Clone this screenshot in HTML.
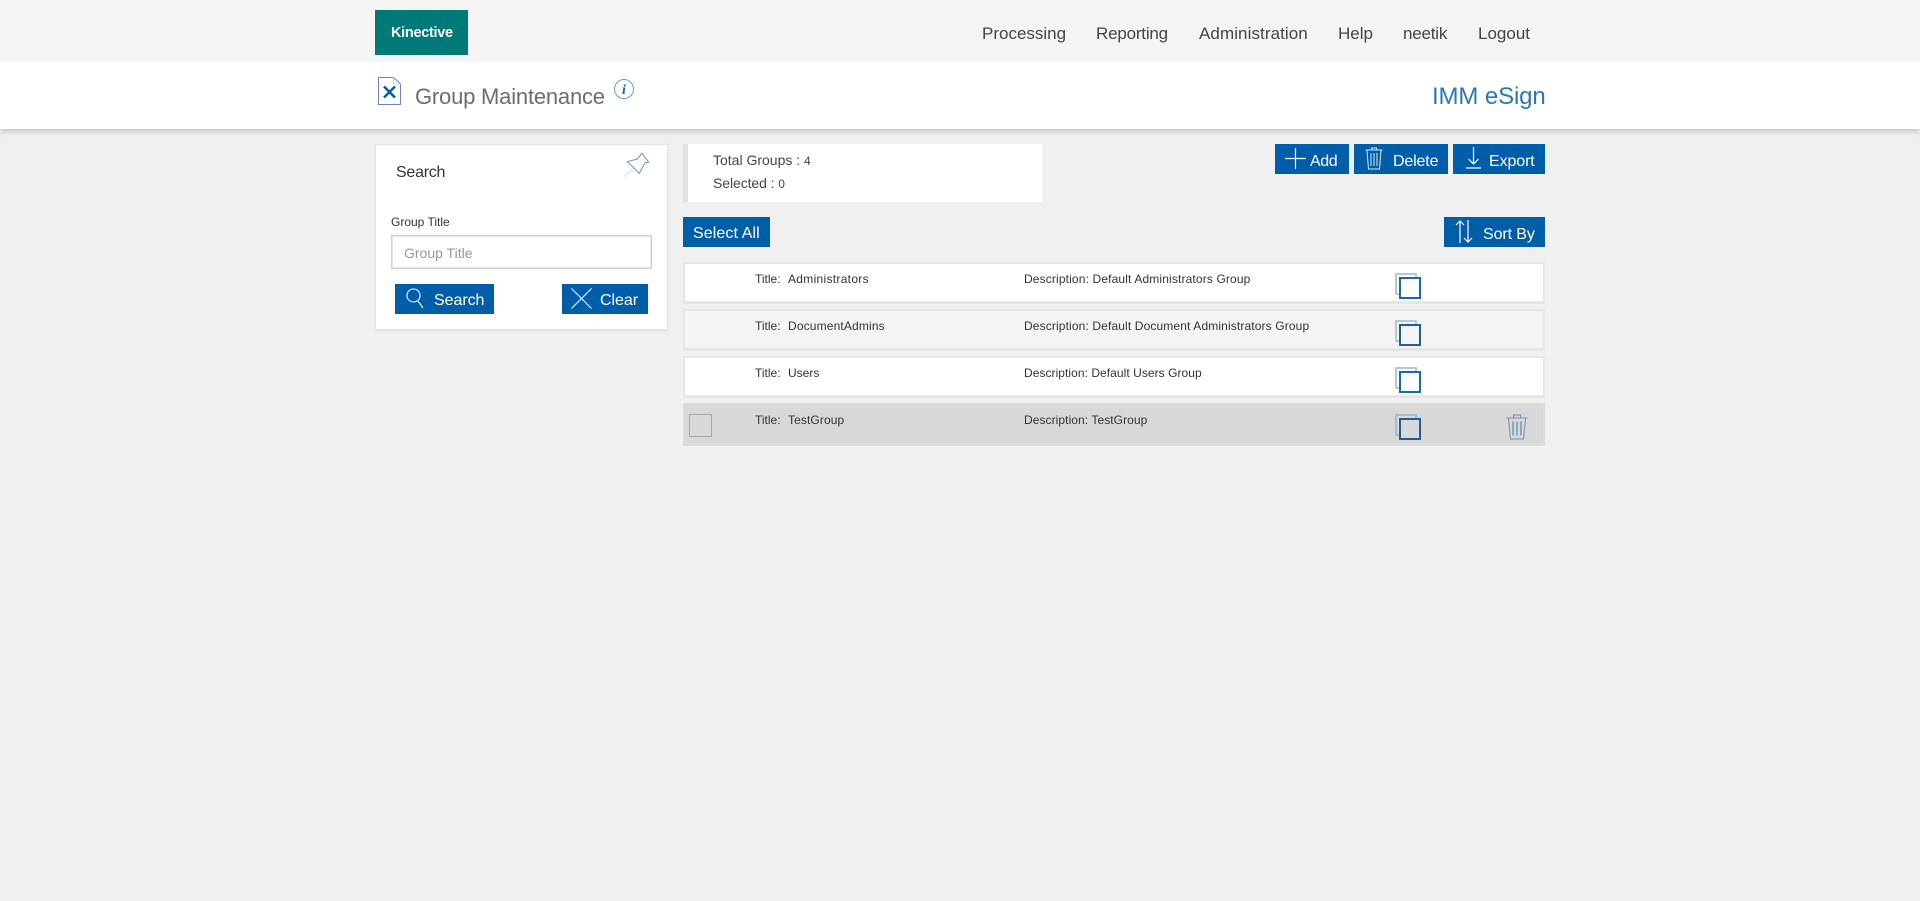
<!DOCTYPE html>
<html lang="en">
<head>
<meta charset="utf-8">
<title>Group Maintenance</title>
<style>
html,body{margin:0;padding:0;width:1920px;height:901px;overflow:hidden;background:#f0f0f0;font-family:"Liberation Sans",sans-serif;color:#333}
.a{position:absolute;white-space:nowrap}
.box{position:absolute;box-sizing:border-box}
.topbar{position:absolute;left:0;top:0;width:1920px;height:62px;background:#f4f4f4;z-index:0}
.head{position:absolute;left:0;top:62px;width:1920px;height:67px;background:#fff;box-shadow:0 3px 5px rgba(0,0,0,.16);clip-path:inset(0 0 -12px 0)}
.nav{font-size:17px;line-height:20px;top:24px;color:#444}
.btn{position:absolute;background:#005ea8;height:30px}
.bt{color:#fff;font-size:16px;line-height:20px}
.row{position:absolute;left:683px;width:862px;box-sizing:border-box;border:2px solid #e6e6e6;border-bottom-width:3px;background:#fff}
.rt{font-size:12px;line-height:16px;color:#333}
.back{width:22px;height:22px;border:2px solid #b4cad2;border-radius:1px}
.front{width:22px;height:22px;border:2px solid #1a69ab}
svg{position:absolute;overflow:visible}
</style>
</head>
<body>
<div class="topbar"></div>
<div class="box" style="left:375px;top:10px;width:93px;height:45px;background:#007a78"></div>
<div class="a" style="left:391px;top:23px;font-size:14.5px;line-height:20px;font-weight:bold;color:#fff;letter-spacing:-.3px">Kinective</div>
<div class="a nav" style="left:982px">Processing</div>
<div class="a nav" style="left:1096px;letter-spacing:-.2px">Reporting</div>
<div class="a nav" style="left:1199px;letter-spacing:.08px">Administration</div>
<div class="a nav" style="left:1338px">Help</div>
<div class="a nav" style="left:1403px;letter-spacing:-.2px">neetik</div>
<div class="a nav" style="left:1478px">Logout</div>

<div class="head"></div>
<svg style="left:378px;top:77px" width="24" height="30" viewBox="0 0 24 30">
<path d="M.5.5H15.5L22.5 7V27.5H.5Z" fill="#fff" stroke="#6f80bc"/>
<path d="M15.5 .5V7H22.5" fill="none" stroke="#c0cede"/>
<path d="M6 9.5L17 20.5M17 9.5L6 20.5" stroke="#005ea8" stroke-width="2.4" fill="none"/>
</svg>
<div class="a" style="left:415px;top:83px;font-size:22px;line-height:28px;color:#6c6c78;letter-spacing:-.2px">Group Maintenance</div>
<svg style="left:614px;top:79px" width="20" height="20" viewBox="0 0 20 20">
<circle cx="10" cy="10" r="9.5" fill="#fff" stroke="#6f9cc8"/>
<text x="10" y="15" text-anchor="middle" font-family="Liberation Serif,serif" font-style="italic" font-weight="bold" font-size="14" fill="#1a5f9e">i</text>
</svg>
<div class="a" style="left:1432px;top:81px;font-size:24px;line-height:32px;color:#2a78b8;letter-spacing:-.12px">IMM eSign</div>

<!-- search panel -->
<div class="box" style="left:375px;top:144px;width:293px;height:186px;background:#fff;border:1px solid #e4e4e4;box-shadow:0 1px 2px rgba(0,0,0,.08)"></div>
<div class="a" style="left:396px;top:163px;font-size:16px;line-height:20px;color:#333;letter-spacing:-.25px">Search</div>
<svg style="left:622px;top:152px" width="28" height="27" viewBox="0 0 28 27" fill="none">
<path d="M19.7 1.3L26.7 10L23 11L17.3 21.3L5.3 9.7L15.5 7Z" stroke="#6c93c4" stroke-width="1"/>
<path d="M11.3 16.3L2 24.7" stroke="#d4dce6" stroke-width="1"/>
</svg>
<div class="a" style="left:391px;top:214px;font-size:12px;line-height:16px;color:#333">Group Title</div>
<div class="box" style="left:391px;top:235px;width:261px;height:34px;background:#fff;border:1px solid #cfcfcf;box-shadow:inset 0 0 0 .5px #cfcfcf"></div>
<div class="a" style="left:404px;top:244px;font-size:14px;line-height:18px;color:#999">Group Title</div>
<div class="btn" style="left:395px;top:284px;width:99px"></div>
<svg style="left:406px;top:288px" width="18" height="20" viewBox="0 0 18 20" fill="none" stroke="#fff" stroke-width="1.1">
<circle cx="7.5" cy="7.5" r="6.5"/><path d="M12 13L17 20"/>
</svg>
<div class="a bt" style="left:434px;top:291px;letter-spacing:-.05px">Search</div>
<div class="btn" style="left:562px;top:284px;width:86px"></div>
<svg style="left:571px;top:288px" width="21" height="21" viewBox="0 0 21 21" fill="none" stroke="#fff" stroke-width="1.1">
<path d="M.5.5L20.5 20.5M20.5.5L.5 20.5"/>
</svg>
<div class="a bt" style="left:600px;top:291px;letter-spacing:-.05px">Clear</div>

<!-- stats -->
<div class="box" style="left:683px;top:144px;width:359px;height:58px;background:#fff;border-left:5px solid #e0e0e0"></div>
<div class="a" style="left:713px;top:151px;font-size:14px;line-height:18px;color:#444">Total Groups : <span style="font-size:12px">4</span></div>
<div class="a" style="left:713px;top:174px;font-size:14px;line-height:18px;color:#444;letter-spacing:-.08px">Selected : <span style="font-size:12px">0</span></div>

<!-- top buttons -->
<div class="btn" style="left:1275px;top:144px;width:74px"></div>
<svg style="left:1285px;top:148px" width="21" height="21" viewBox="0 0 21 21" stroke="#fff" stroke-width="1.2"><path d="M10.5 0V21M0 10.5H21"/></svg>
<div class="a bt" style="left:1310px;top:152px;letter-spacing:-.4px">Add</div>
<div class="btn" style="left:1354px;top:144px;width:94px"></div>
<svg style="left:1365px;top:147px" width="18" height="23" viewBox="0 0 18 23" fill="none" stroke="#d8e8f4" stroke-width="1">
<path d="M6.5 2.5V1H11.5V2.5M.5 3H17.5M2 3.5L3.5 22H14.5L16 3.5M6 6V19M9 6V19M12 6V19"/>
</svg>
<div class="a bt" style="left:1393px;top:152px;letter-spacing:-.15px">Delete</div>
<div class="btn" style="left:1453px;top:144px;width:92px"></div>
<svg style="left:1466px;top:147px" width="15" height="22" viewBox="0 0 15 22" fill="none" stroke="#fff" stroke-width="1.2">
<path d="M7.5 0V17M2.5 12L7.5 17L12.5 12M0 21H15"/>
</svg>
<div class="a bt" style="left:1489px;top:152px;letter-spacing:-.1px">Export</div>

<div class="btn" style="left:683px;top:217px;width:87px"></div>
<div class="a bt" style="left:693px;top:224px;letter-spacing:.1px">Select All</div>
<div class="btn" style="left:1444px;top:217px;width:101px"></div>
<svg style="left:1455px;top:220px" width="18" height="23" viewBox="0 0 18 23" fill="none" stroke="#fff" stroke-width="1.2">
<path d="M5 23V1M1 5L5 1L9 5M13 0V22M9 18L13 22L17 18"/>
</svg>
<div class="a bt" style="left:1483px;top:225px;letter-spacing:-.1px">Sort By</div>

<!-- rows -->
<div class="row" style="top:262px;height:42px"></div>
<div class="row" style="top:309px;height:42px;background:#f4f4f4"></div>
<div class="row" style="top:356px;height:42px"></div>
<div class="row" style="top:403px;height:43px;background:#d8d8d8;border-color:#dcdcdc"></div>

<div class="a rt" style="left:755px;top:271px">Title:</div><div class="a rt" style="left:788px;top:271px;letter-spacing:.3px">Administrators</div>
<div class="a rt" style="left:1024px;top:271px;letter-spacing:.14px">Description: Default Administrators Group</div>
<div class="a rt" style="left:755px;top:318px">Title:</div><div class="a rt" style="left:788px;top:318px;letter-spacing:.15px">DocumentAdmins</div>
<div class="a rt" style="left:1024px;top:318px;letter-spacing:.13px">Description: Default Document Administrators Group</div>
<div class="a rt" style="left:755px;top:365px">Title:</div><div class="a rt" style="left:788px;top:365px">Users</div>
<div class="a rt" style="left:1024px;top:365px;letter-spacing:.05px">Description: Default Users Group</div>
<div class="a rt" style="left:755px;top:412px">Title:</div><div class="a rt" style="left:788px;top:412px;letter-spacing:.1px">TestGroup</div>
<div class="a rt" style="left:1024px;top:412px;letter-spacing:.07px">Description: TestGroup</div>

<div class="box" style="left:689px;top:414px;width:23px;height:23px;border:1px solid #a8a8a8;background:#d8d8d8"></div>

<div class="box back" style="left:1395px;top:273px"></div>
<div class="box front" style="left:1399px;top:277px;background:#fff"></div>
<div class="box back" style="left:1395px;top:320px"></div>
<div class="box front" style="left:1399px;top:324px;background:#f4f4f4;border-color:#1f5f96"></div>
<div class="box back" style="left:1395px;top:367px"></div>
<div class="box front" style="left:1399px;top:371px;background:#fff"></div>
<div class="box back" style="left:1395px;top:414px;border-color:#a6bcc8"></div>
<div class="box front" style="left:1399px;top:418px;background:#d8d8d8;border-color:#1f5f96"></div>

<svg style="left:1506px;top:414px" width="22" height="26" viewBox="0 0 22 26" fill="none" stroke="#6f8fb8" stroke-width="1">
<path d="M7.5 3.5V1H14.5V3.5M.5 4H21.5M2.5 4.5L4.5 25H17.5L19.5 4.5"/>
<path d="M7 7.5V21.5M11 7.5V21.5M15 7.5V21.5" stroke="#3c78b4"/>
</svg>
</body>
</html>
